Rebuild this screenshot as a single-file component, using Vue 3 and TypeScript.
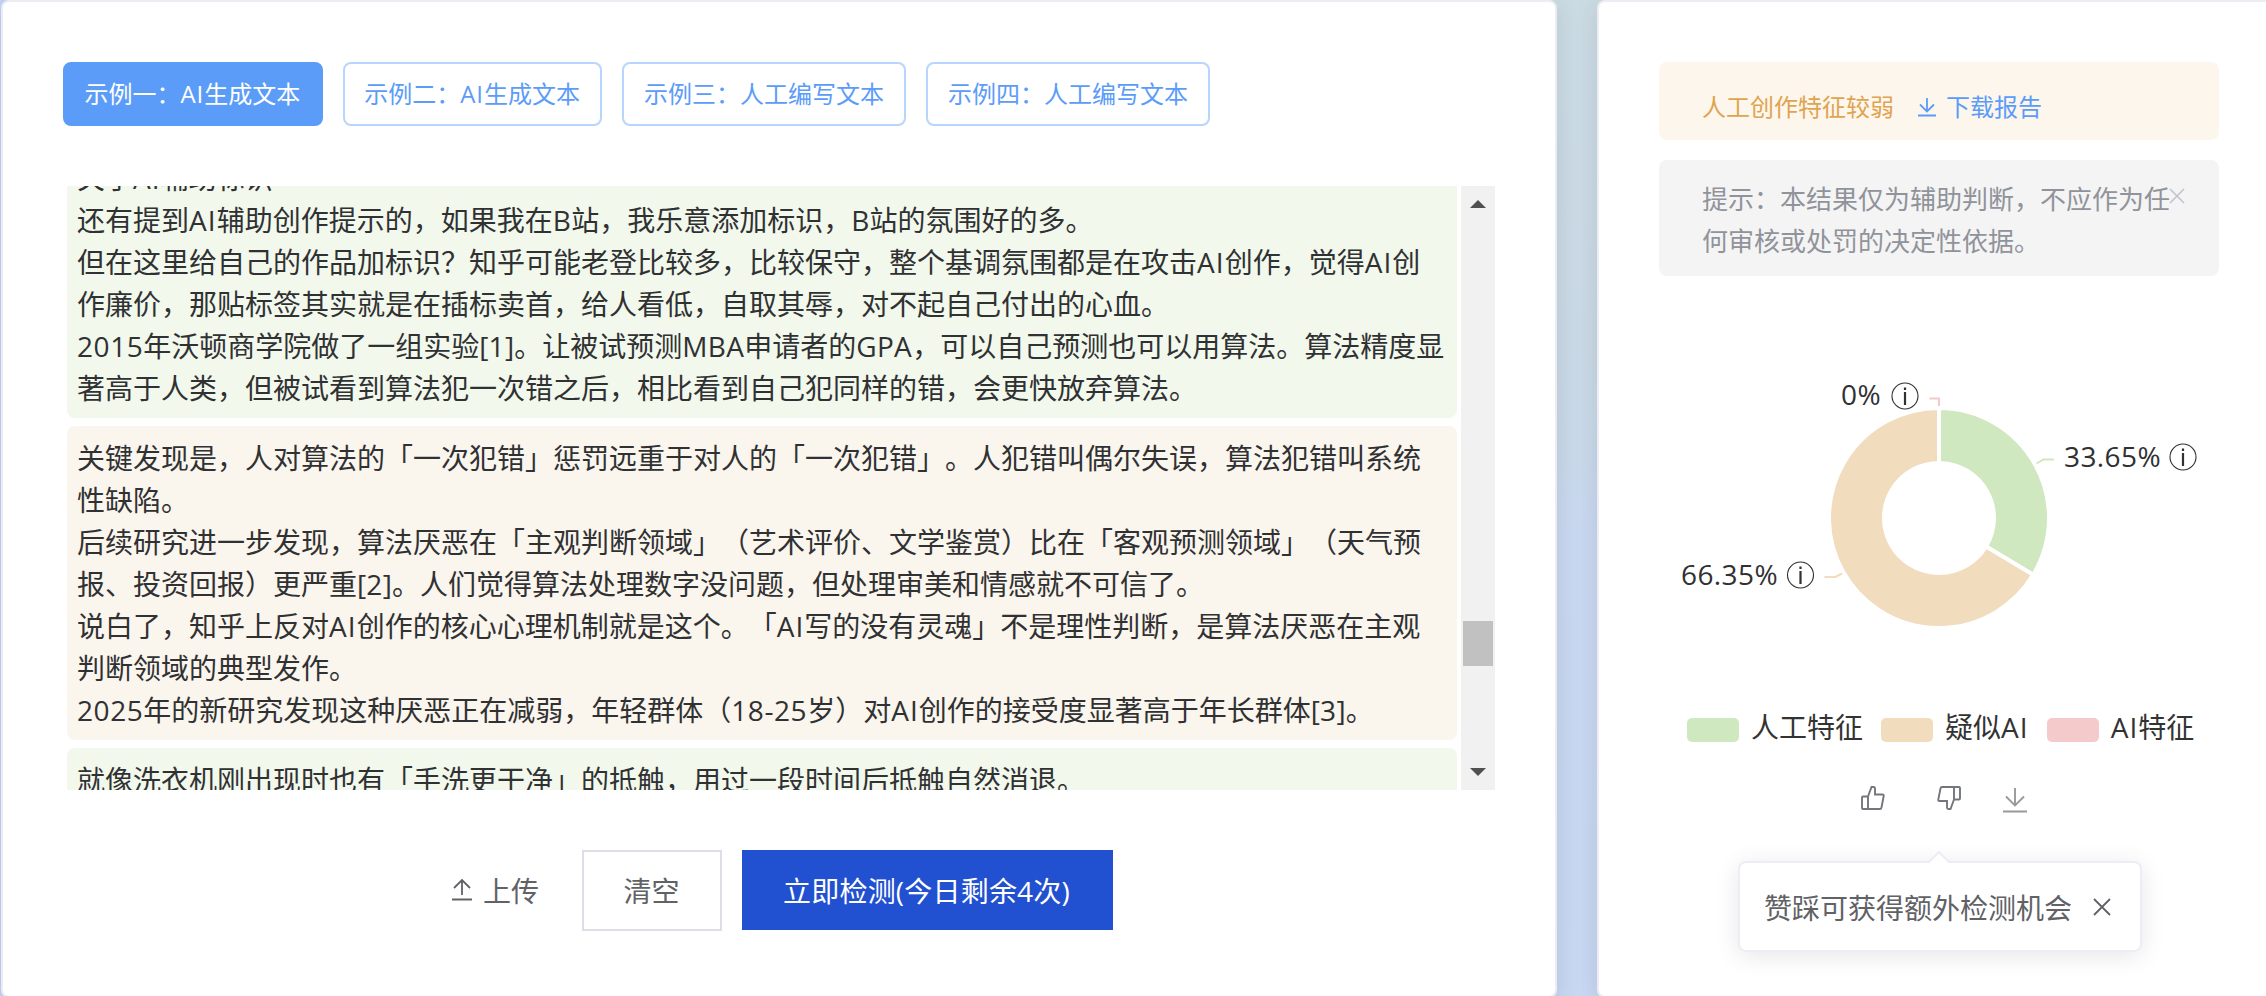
<script setup lang="ts">
interface Run {
  text: string
  kind: 'pair' | 'caps' | 'digits' | 'han'
}
interface Block {
  tone: 'human' | 'mixed'
  lines: string[]
}

const examples: string[] = [
  '示例一：AI生成文本',
  '示例二：AI生成文本',
  '示例三：人工编写文本',
  '示例四：人工编写文本',
]

const blocks: Block[] = [
  {
    tone: 'human',
    lines: [
      '关于AI辅助标识',
      '还有提到AI辅助创作提示的，如果我在B站，我乐意添加标识，B站的氛围好的多。',
      '但在这里给自己的作品加标识？知乎可能老登比较多，比较保守，整个基调氛围都是在攻击AI创作，觉得AI创作廉价，那贴标签其实就是在插标卖首，给人看低，自取其辱，对不起自己付出的心血。',
      '2015年沃顿商学院做了一组实验[1]。让被试预测MBA申请者的GPA，可以自己预测也可以用算法。算法精度显著高于人类，但被试看到算法犯一次错之后，相比看到自己犯同样的错，会更快放弃算法。',
    ],
  },
  {
    tone: 'mixed',
    lines: [
      '关键发现是，人对算法的「一次犯错」惩罚远重于对人的「一次犯错」。人犯错叫偶尔失误，算法犯错叫系统性缺陷。',
      '后续研究进一步发现，算法厌恶在「主观判断领域」（艺术评价、文学鉴赏）比在「客观预测领域」（天气预报、投资回报）更严重[2]。人们觉得算法处理数字没问题，但处理审美和情感就不可信了。',
      '说白了，知乎上反对AI创作的核心心理机制就是这个。「AI写的没有灵魂」不是理性判断，是算法厌恶在主观判断领域的典型发作。',
      '2025年的新研究发现这种厌恶正在减弱，年轻群体（18-25岁）对AI创作的接受度显著高于年长群体[3]。',
    ],
  },
  {
    tone: 'human',
    lines: ['就像洗衣机刚出现时也有「手洗更干净」的抵触，用过一段时间后抵触自然消退。'],
  },
]

// Latin capitals and digits get slightly wider tracking than the surrounding text
function kindOf(text: string): Run['kind'] {
  if (text === 'AI') return 'pair'
  if (/^[A-Z]+$/.test(text)) return 'caps'
  return /^[0-9-]+$/.test(text) ? 'digits' : 'han'
}
function runs(line: string): Run[] {
  return line
    .split(/([A-Z]+|[0-9-]+)/)
    .filter((t) => t.length > 0)
    .map((text) => ({ text, kind: kindOf(text) }))
}

const CX = 280
const CY = 188
const R = 110
const r = 55
function slice(from: number, to: number): string {
  const p = (radius: number, f: number): string => {
    const a = f * 2 * Math.PI
    return `${(CX + radius * Math.sin(a)).toFixed(2)} ${(CY - radius * Math.cos(a)).toFixed(2)}`
  }
  const big = to - from > 0.5 ? 1 : 0
  return `M${p(R, from)}A${R} ${R} 0 ${big} 1 ${p(R, to)}L${p(r, to)}A${r} ${r} 0 ${big} 0 ${p(r, from)}Z`
}
const slices = [
  { d: slice(0, 0.3365), fill: '#cfe8bf' },
  { d: slice(0.3365, 1), fill: '#f2dcbe' },
]
const labels = [
  { text: '0%', x: 182, y: 75, ix: 246, iy: 66 },
  { text: '33.65%', x: 405, y: 137, ix: 524, iy: 127 },
  { text: '66.35%', x: 22, y: 255, ix: 141.5, iy: 245 },
]
const legend = [
  { name: '人工特征', tone: 'green' },
  { name: '疑似AI', tone: 'tan' },
  { name: 'AI特征', tone: 'pink' },
]
</script>

<template>
  <div class="page">
    <section class="card editor">
      <div class="examples">
        <button v-for="(e, i) in examples" :key="e" class="example" :class="{ active: i === 0 }">
          <span v-for="(t, k) in runs(e)" :key="k" :class="t.kind">{{ t.text }}</span>
        </button>
      </div>
      <div class="viewer">
        <div class="content">
          <div v-for="(b, i) in blocks" :key="i" class="block" :class="b.tone">
            <p v-for="(l, j) in b.lines" :key="j"><span v-for="(t, k) in runs(l)" :key="k" :class="t.kind">{{ t.text }}</span></p>
          </div>
        </div>
        <div class="scrollbar">
          <svg class="arrow" viewBox="0 0 16 8"><path d="M8 0L16 8H0Z" /></svg>
          <div class="thumb"></div>
          <svg class="arrow" viewBox="0 0 16 8"><path d="M0 0H16L8 8Z" /></svg>
        </div>
      </div>
      <div class="actions">
        <span class="upload">
          <svg viewBox="0 0 22 24" width="22" height="24"><path d="M11 17V2M3 10L11 2L19 10M1 21.5H21" /></svg>
          上传
        </span>
        <button class="clear">清空</button>
        <button class="detect">立即检测(今日剩余4次)</button>
      </div>
    </section>

    <section class="card result">
      <div class="alert warn">
        <span>人工创作特征较弱</span>
        <a class="report">
          <svg viewBox="0 0 20 22" width="20" height="22"><path d="M10 2V15.500M3 8.500L10 15.500L17 8.500M1 19.500H19" /></svg>
          下载报告
        </a>
      </div>
      <div class="alert info">
        <p>提示：本结果仅为辅助判断，不应作为任何审核或处罚的决定性依据。</p>
        <svg class="dismiss" viewBox="0 0 16 16"><path d="M1 1L15 15M15 1L1 15" /></svg>
      </div>

      <svg class="chart" viewBox="0 0 560 370">
        <path v-for="s in slices" :key="s.fill" :d="s.d" :fill="s.fill" stroke="#fff" stroke-width="4" />
        <g fill="none" stroke-width="2">
          <path d="M270.500 68.500H280V76" stroke="#f4caca" />
          <path d="M377.500 133.500L384.500 129.500H395" stroke="#cfe8bf" />
          <path d="M165.500 247H176.500L183 243.500" stroke="#f2dcbe" />
        </g>
        <g v-for="l in labels" :key="l.text">
          <text :x="l.x" :y="l.y" class="value">{{ l.text }}</text>
          <circle :cx="l.ix" :cy="l.iy" r="13" fill="none" stroke="#303133" stroke-width="1.100" />
          <path :d="`M${l.ix} ${l.iy - 4}V${l.iy + 9}M${l.ix} ${l.iy - 8.500}V${l.iy - 6}`" stroke="#303133" stroke-width="2.200" />
        </g>
      </svg>

      <div class="legend">
        <span v-for="l in legend" :key="l.name" class="entry">
          <i class="swatch" :class="l.tone"></i>
          <b><span v-for="(t, k) in runs(l.name)" :key="k" :class="t.kind">{{ t.text }}</span></b>
        </span>
      </div>

      <div class="feedback">
        <svg viewBox="0 0 26 26" width="26" height="26"><path d="M8 11.500L11.500 2H13.500Q15 2 15 3.500V9.500H22.500Q24 9.500 23.700 11L21.500 22.500Q21.200 24 20 24H3Q2 24 2 23V12.500Q2 11.500 3 11.500H8V24" /></svg>
        <svg class="down" viewBox="0 0 26 26" width="26" height="26"><path d="M18 14.500L14.500 24H12.500Q11 24 11 22.500V16H3.500Q2 16 2.300 14.500L4.500 3.500Q4.800 2 6 2H23Q24 2 24 3V13.500Q24 14.500 23 14.500H18V2" /></svg>
        <svg class="save" viewBox="0 0 26 26" width="26" height="26"><path d="M13 1V18M4 9.500L13 18.500L22 9.500M1 24.500H25" /></svg>
      </div>

      <div class="tip">
        <svg class="caret" viewBox="0 0 22 12"><path d="M0 12L11 1L22 12" /></svg>
        <span class="tip-text">赞踩可获得额外检测机会</span>
        <svg class="close" viewBox="0 0 18 18"><path d="M1 1L17 17M17 1L1 17" /></svg>
      </div>
    </section>
  </div>
</template>

<style>
body {
  margin: 0;
  overflow: hidden;
}
</style>

<style scoped>
.page {
  display: flex;
  gap: 40px;
  box-sizing: border-box;
  width: 2302px;
  height: 996px;
  padding-left: 1px;
  background:
    linear-gradient(90deg, #c6d1f4 0, #c6d1f4 10px, transparent 10px),
    linear-gradient(180deg, #cbdbe4 0%, #cad9e6 35%, #c9d9ea 46%, #c9d8f1 54%, #c8d7f2 100%);
  font-family: "Open Sans", "Noto Sans CJK SC", sans-serif;
  font-size: 28px;
  line-height: 42px;
  color: #303133;
  text-spacing-trim: space-all;
}
.card {
  box-sizing: border-box;
  height: 998px;
  background: #fff;
  border: 2px solid #ebedf3;
  border-radius: 8px;
  box-shadow: 0 4px 24px rgba(0, 0, 0, 0.1);
}
.pair {
  letter-spacing: 0.038em;
}
.caps {
  letter-spacing: 0.012em;
}
.digits {
  letter-spacing: 0.02em;
}
p {
  margin: 0;
}
button {
  font: inherit;
  box-sizing: border-box;
}
svg {
  fill: none;
}
.editor {
  width: 1556px;
  flex: none;
  padding: 60px 60px 0;
}
.examples {
  display: flex;
  gap: 20px;
}
.example {
  height: 64px;
  padding: 0 20.5px 0 19.5px;
  border: 2px solid #b8d6fd;
  border-radius: 8px;
  background: #fff;
  color: #5c9cf9;
  font-size: 24px;
  white-space: nowrap;
}
.example.active {
  background: #5c9cf9;
  border-color: #5c9cf9;
  color: #fff;
}
.viewer {
  display: flex;
  width: 1428px;
  height: 604px;
  margin: 60px 0 0 4px;
  overflow: hidden;
}
.content {
  width: 1390px;
  margin: -40px 4px 0 0;
}
.block {
  padding: 11px 10px 9px;
  margin-bottom: 8px;
  border-radius: 8px;
}
.human {
  background: #f2f8ec;
}
.mixed {
  background: #faf5ed;
}
.scrollbar {
  display: flex;
  flex-direction: column;
  align-items: center;
  box-sizing: border-box;
  width: 34px;
  height: 604px;
  padding: 14px 0;
  background: #f1f1f1;
}
.arrow {
  width: 16px;
  height: 8px;
  fill: #505050;
}
.thumb {
  width: 30px;
  height: 45px;
  margin: 413px 0 102px;
  background: #c1c1c1;
}
.actions {
  display: flex;
  align-items: center;
  height: 80px;
  margin: 60px 0 0 388px;
}
.upload {
  display: flex;
  align-items: center;
  gap: 10px;
  width: 131px;
  padding-top: 2px;
  box-sizing: border-box;
  color: #606266;
}
.upload svg {
  margin-top: -2px;
  stroke: #606266;
  stroke-width: 1.8;
}
.clear {
  width: 140px;
  height: 81px;
  padding: 2px 1px 0 0;
  border: 2px solid #dcdfe6;
  background: #fff;
  color: #606266;
}
.detect {
  width: 371px;
  height: 80px;
  margin-left: 20px;
  padding: 2px 2px 0 0;
  border: 0;
  background: #2150d1;
  color: #fff;
  letter-spacing: 0.2px;
}
.result {
  width: 704px;
  flex: none;
  padding: 60px 0 0 60px;
}
.alert {
  box-sizing: border-box;
  width: 560px;
  border-radius: 8px;
}
.warn {
  display: flex;
  align-items: flex-start;
  gap: 23px;
  height: 78px;
  padding: 24px 0 0 43px;
  background: #fdf6ec;
  color: #dfa450;
  font-size: 24px;
}
.report {
  display: flex;
  align-items: center;
  gap: 9px;
  color: #5c9cf9;
}
.report svg {
  stroke: #5c9cf9;
  stroke-width: 1.8;
}
.info {
  position: relative;
  height: 116px;
  margin-top: 20px;
  padding: 18px 45px 0 43px;
  background: #f4f4f5;
  color: #909399;
  font-size: 26px;
}
.dismiss {
  position: absolute;
  top: 28px;
  right: 34px;
  width: 16px;
  height: 16px;
  stroke: #c0c4cc;
  stroke-width: 1.6;
}
.chart {
  display: block;
  width: 560px;
  height: 370px;
  margin-top: 54px;
}
.value {
  fill: #303133;
  font-size: 28px;
  letter-spacing: 0.4px;
}
.legend {
  display: flex;
  margin: 6px 0 0 28px;
}
.entry {
  display: flex;
  align-items: center;
  gap: 12px;
  margin-right: 18px;
}
.entry b {
  font-weight: 400;
  color: #333;
}
.swatch {
  width: 52px;
  height: 24px;
  margin-top: 5px;
  border-radius: 5px;
}
.green {
  background: #cfe8bf;
}
.tan {
  background: #f2dcbe;
}
.pink {
  background: #f4caca;
}
.feedback {
  display: flex;
  margin: 37px 0 0 201px;
}
.feedback svg {
  stroke: #73767a;
  stroke-width: 1.900;
}
.feedback .down {
  margin-left: 50px;
}
.feedback .save {
  margin: 2px 0 0 40px;
  stroke: #999;
}
.tip {
  position: relative;
  display: flex;
  align-items: center;
  box-sizing: border-box;
  width: 404px;
  height: 91px;
  margin: 48px 0 0 79px;
  padding-left: 24px;
  border: 2px solid #ebeef5;
  border-radius: 8px;
  background: #fff;
  color: #606266;
  box-shadow: 0 4px 24px rgba(0, 0, 0, 0.1);
}
.tip-text {
  padding-top: 2px;
}
.caret {
  position: absolute;
  top: -12px;
  left: 188px;
  width: 22px;
  height: 12px;
  fill: #fff;
  stroke: #ebeef5;
  stroke-width: 2;
}
.close {
  width: 18px;
  height: 18px;
  margin-left: 21px;
  stroke: #606266;
  stroke-width: 1.800;
}
</style>
